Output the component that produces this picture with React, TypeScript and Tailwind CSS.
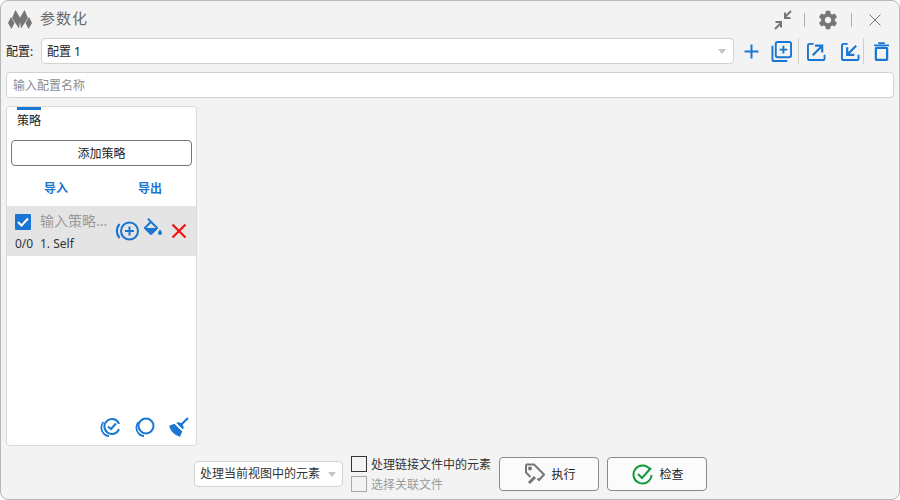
import { ReactNode } from "react";

const font = "font-['Noto_Sans','Noto_Sans_CJK_SC',sans-serif]";

function Blue({ children, size = 24, box = 24 }: { children: ReactNode; size?: number; box?: number }) {
  return (
    <svg width={size} height={size} viewBox={`0 0 ${box} ${box}`} fill="none" stroke="#1976d2" strokeWidth="2" className="shrink-0">
      {children}
    </svg>
  );
}

function Logo() {
  return (
    <svg width="24" height="19" viewBox="0 0 24 19" fill="#767676" className="shrink-0 mb-[1px]">
      <path d="M3 7 6.500 13 3.500 19 0 13Z" />
      <path d="M7.500 0 12.500 8.500 11 18.500 4 8Z" />
      <path d="M16.500 0 11.500 8.500 13 18.500 20 8Z" />
      <path d="M21 7 17.500 13 20.500 19 24 13Z" />
    </svg>
  );
}

function TopIcons() {
  return (
    <div className="flex items-center">
      <svg width="20" height="20" viewBox="0 0 20 20" fill="none" stroke="#767676" strokeWidth="2" className="mr-[11px]">
        <path d="M18 1 12 7M12 2.500V8H17.500" />
        <path d="M2 19 8 13M2.500 12H8V17.500" />
      </svg>
      <div className="w-px h-[14px] bg-[#b0b0b0] mr-[12px]" />
      <svg width="22" height="22" viewBox="0 0 24 24" fill="#767676" className="mr-[12px]">
        <path d="M19.430 12.980c.040-.320.070-.640.070-.980s-.030-.660-.070-.980l2.110-1.650c.190-.150.240-.420.120-.640l-2-3.460c-.120-.220-.390-.300-.610-.220l-2.490 1c-.520-.400-1.080-.730-1.690-.980l-.380-2.650A.488.488 0 0 0 14 2h-4c-.250 0-.460.180-.490.420l-.380 2.650c-.610.250-1.170.590-1.690.980l-2.490-1c-.230-.090-.490 0-.610.220l-2 3.460c-.130.220-.070.490.120.640l2.110 1.650c-.040.320-.070.650-.070.980s.030.660.070.980l-2.110 1.650c-.190.150-.240.420-.120.640l2 3.460c.120.220.390.300.610.220l2.490-1c.520.400 1.080.730 1.690.980l.380 2.650c.030.240.240.420.490.420h4c.250 0 .460-.180.490-.420l.380-2.650c.610-.250 1.170-.590 1.690-.980l2.490 1c.230.090.490 0 .610-.220l2-3.460c.120-.220.070-.490-.120-.640l-2.110-1.650zM12 15.500c-1.930 0-3.500-1.570-3.500-3.500s1.570-3.500 3.500-3.500 3.500 1.570 3.500 3.500-1.570 3.500-3.500 3.500z" />
      </svg>
      <div className="w-px h-[14px] bg-[#b0b0b0] mr-[17px]" />
      <svg width="12" height="12" viewBox="0 0 12 12" fill="none" stroke="#767676" strokeWidth="1" className="mr-[18px]">
        <path d="M0.500 0.500 11.500 11.500M11.500 0.500 0.500 11.500" />
      </svg>
    </div>
  );
}

function Caret({ color = "#c4c4c4" }: { color?: string }) {
  return (
    <svg width="8" height="5" viewBox="0 0 8 5" fill={color} className="shrink-0">
      <path d="M0 0H8L4 5Z" />
    </svg>
  );
}

function ConfigTools() {
  return (
    <div className="flex items-center ml-[10px]">
      <Blue size={15} box={15}>
        <path d="M7.500 0.500V14.500M0.500 7.500H14.500" />
      </Blue>
      <div className="ml-[12px]">
        <Blue size={21} box={22}>
          <rect x="5" y="1" width="16" height="16" rx="2" />
          <path d="M1.500 5V19a2 2 0 0 0 2 2H17M13 5V13M9 9H17" />
        </Blue>
      </div>
      <div className="w-px h-[26px] bg-[#cfcfcf] ml-[6px]" />
      <div className="ml-[8px]">
        <Blue size={19} box={20}>
          <path d="M7 2H3a2 2 0 0 0-2 2V17a2 2 0 0 0 2 2H16.500a2 2 0 0 0 2-2V13.500" />
          <path d="M6 14 15 5M8.500 3.800H16V11" strokeWidth="2.300" />
        </Blue>
      </div>
      <div className="ml-[15px]">
        <Blue size={19} box={20}>
          <path d="M7 2H3a2 2 0 0 0-2 2V17a2 2 0 0 0 2 2H16.500a2 2 0 0 0 2-2V13.500" />
          <path d="M16 4 7 13M6.500 5.500V13.500H14" strokeWidth="2.300" />
        </Blue>
      </div>
      <div className="w-px h-[26px] bg-[#cfcfcf] ml-[3px]" />
      <div className="ml-[10px]">
        <svg width="15" height="19" viewBox="0 0 16 20" fill="none" stroke="#1976d2" strokeWidth="2">
          <path d="M0 3.500H16" />
          <path d="M4.500 1H11.500" />
          <rect x="2" y="6" width="12" height="13" rx="1" strokeWidth="2.400" />
        </svg>
      </div>
    </div>
  );
}

function RowIcons() {
  return (
    <div className="flex items-center ml-auto mr-[9px] self-center">
      <svg width="25" height="20" viewBox="0 0 25 20" fill="none" stroke="#1976d2" strokeWidth="2">
        <circle cx="14.500" cy="10" r="8.500" />
        <path d="M14.500 5.500V14.500M10 10H19" />
        <path d="M4.500 3C1 7 1 13 4.500 17" strokeWidth="2.200" />
      </svg>
      <svg width="24" height="24" viewBox="0 0 24 24" fill="#1976d2" className="ml-[1px] mb-[2px]">
        <path d="M19 11.500s-2 2.170-2 3.500a2 2 0 0 0 4 0c0-1.330-2-3.500-2-3.500M5.210 10 10 5.210 14.790 10m1.770-1.060L7.620 0 6.210 1.410l2.380 2.380-5.150 5.150c-.590.560-.590 1.530 0 2.120l5.500 5.500c.290.290.680.440 1.060.440s.770-.150 1.060-.440l5.500-5.500c.590-.590.590-1.560 0-2.120Z" />
      </svg>
      <svg width="16" height="16" viewBox="0 0 16 16" fill="none" stroke="#f21111" strokeWidth="2.200" className="ml-[6px]">
        <path d="M1.500 1.500 14.500 14.500M14.500 1.500 1.500 14.500" />
      </svg>
    </div>
  );
}

function PanelTools() {
  return (
    <div className="flex items-center justify-end gap-[14px] pr-[7px] pb-[8px]">
      <svg width="21" height="20" viewBox="0 0 21 20" fill="none" stroke="#1976d2" strokeWidth="2">
        <path d="M20 7A7.500 7.500 0 1 0 20 12 7.500 7.500 0 0 1 13 17" />
        <path d="M9 9.500 12 12 17 6.500" />
        <path d="M4.500 5C1.800 8 1.200 13 5 17c1.700 1.500 3.500 2 5 2" strokeWidth="1.800" />
      </svg>
      <svg width="21" height="20" viewBox="0 0 21 20" fill="none" stroke="#1976d2" strokeWidth="2">
        <circle cx="12" cy="9" r="7.500" />
        <path d="M4.500 5C1.800 8 1.200 13 5 17c1.700 1.500 3.500 2 5 2" strokeWidth="1.800" />
      </svg>
      <svg width="20" height="20" viewBox="2.300 2.500 18.600 19" fill="#1976d2">
        <path d="M19.360 2.720 20.780 4.140 15.060 9.850C16.130 11.390 16.280 13.240 15.380 14.440L9.060 8.120C10.260 7.220 12.110 7.370 13.650 8.440L19.360 2.720M5.930 17.570C3.920 15.560 2.690 13.160 2.350 10.920L7.230 8.830 14.670 16.270 12.580 21.150C10.340 20.810 7.940 19.580 5.930 17.570Z" />
      </svg>
    </div>
  );
}

function CheckBoxRow({ label, disabled }: { label: string; disabled?: boolean }) {
  return (
    <div className="flex items-center h-[20px]">
      <div className={`w-[16px] h-[16px] border bg-[#f3f3f3] ${disabled ? "border-[#a8a8a8]" : "border-[#333333]"}`} />
      <span className={`ml-[4px] pt-[2px] text-[12px] leading-none ${disabled ? "text-[#9b9b9b]" : "text-[#333333]"}`}>{label}</span>
    </div>
  );
}

function ActionButton({ icon, label }: { icon: ReactNode; label: string }) {
  return (
    <button className="w-[100px] h-[34px] flex items-center justify-center gap-[6px] pl-[2px] bg-[#fbfbfb] border border-[#8a8a8a] rounded-[4px] text-[12px] text-[#222222]">
      {icon}
      <span className="pt-[2px]">{label}</span>
    </button>
  );
}

export default function App() {
  return (
    <div className={`${font} w-[900px] h-[500px] flex flex-col overflow-hidden bg-[#f3f3f3] border border-[#b8b8b8] rounded-[8px] text-[#222222]`}>
      <div className="flex items-center justify-between h-[37px] shrink-0 pl-[7px]">
        <div className="flex items-center">
          <Logo />
          <span className="ml-[8px] mb-[2px] text-[15px] tracking-[1px] text-[#6a6a6a]">参数化</span>
        </div>
        <TopIcons />
      </div>

      <div className="flex items-center h-[26px] shrink-0 pl-[5px]">
        <span className="w-[35px] pt-[2px] text-[12px]">配置:</span>
        <div className="flex items-center flex-1 h-[26px] pl-[5px] pr-[7px] bg-white border border-[#d2d2d2] rounded-[4px] text-[12px]">
          <span className="pt-[2px]">配置 1</span>
          <div className="ml-auto">
            <Caret />
          </div>
        </div>
        <ConfigTools />
        <div className="w-[10px] shrink-0" />
      </div>

      <div className="h-[26px] shrink-0 mt-[8px] mx-[5px] pl-[6px] pt-[2px] flex items-center bg-white border border-[#d2d2d2] rounded-[4px] text-[12px] text-[#8e8e8e]">
        输入配置名称
      </div>

      <div className="flex-1 min-h-0 pt-[8px] pl-[5px]">
        <div className="w-[191px] h-[340px] flex flex-col bg-white border border-[#d8d8d8] rounded-[4px]">
          <div className="w-[24px] h-[3px] ml-[10px] bg-[#1976d2]" />
          <div className="ml-[10px] mt-[2px] text-[12px] leading-[18px]">策略</div>
          <button className="h-[26px] mx-[4px] mt-[10px] pt-[2px] shrink-0 border border-[#757575] rounded-[4px] text-[12px] text-[#222222]">
            添加策略
          </button>
          <div className="grid grid-cols-[94px_94px] h-[40px] shrink-0 items-center pt-[6px] pl-[2px] text-[12px] font-bold text-[#1976d2] text-center">
            <span>导入</span>
            <span>导出</span>
          </div>
          <div className="flex h-[50px] shrink-0 bg-[#e4e4e4] pl-[8px]">
            <div className="w-[25px] pt-[8px] flex flex-col">
              <div className="w-[16px] h-[16px] rounded-[1px] bg-[#1976d2] flex items-center justify-center mb-[6px]">
                <svg width="12" height="10" viewBox="0 0 12 10" fill="none" stroke="white" strokeWidth="2">
                  <path d="M1 5 4.500 8.500 11 1.500" />
                </svg>
              </div>
              <span className="text-[12px] leading-[16px] text-[#333333]">0/0</span>
            </div>
            <div className="pt-[4px] flex flex-col">
              <span className="text-[14px] leading-[21px] text-[#9a9a9a]">输入策略...</span>
              <span className="mt-[5px] text-[12px] leading-[16px] text-[#333333]">1. Self</span>
            </div>
            <RowIcons />
          </div>
          <div className="flex-1" />
          <PanelTools />
        </div>
      </div>

      <div className="flex items-center h-[54px] shrink-0 pt-[4px] pl-[193px]">
        <div className="w-[149px] h-[26px] flex items-center justify-between pl-[5px] pr-[6px] bg-white border border-[#d2d2d2] rounded-[4px] text-[12px] text-[#333333]">
          处理当前视图中的元素
          <Caret />
        </div>
        <div className="ml-[8px] w-[148px] flex flex-col">
          <CheckBoxRow label="处理链接文件中的元素" />
          <CheckBoxRow label="选择关联文件" disabled />
        </div>
        <ActionButton
          label="执行"
          icon={
            <svg width="21" height="22" viewBox="0 0 21 22" fill="none" stroke="#767676" strokeWidth="2">
              <path d="M2 1.500H10L20 11.500 15 17 13.500 15.500" />
              <path d="M2 1.500V9.500L6.500 14" />
              <circle cx="6" cy="5.500" r="1" />
              <path d="M5 20 11 14" strokeWidth="3" />
            </svg>
          }
        />
        <div className="w-[8px] shrink-0" />
        <ActionButton
          label="检查"
          icon={
            <svg width="21" height="21" viewBox="0 0 21 21" fill="none" stroke="#109a3a" strokeWidth="2">
              <path d="M18 5.500A9 9 0 1 0 19.500 11" />
              <path d="M6 10 10 14 19 4" />
            </svg>
          }
        />
      </div>
    </div>
  );
}
